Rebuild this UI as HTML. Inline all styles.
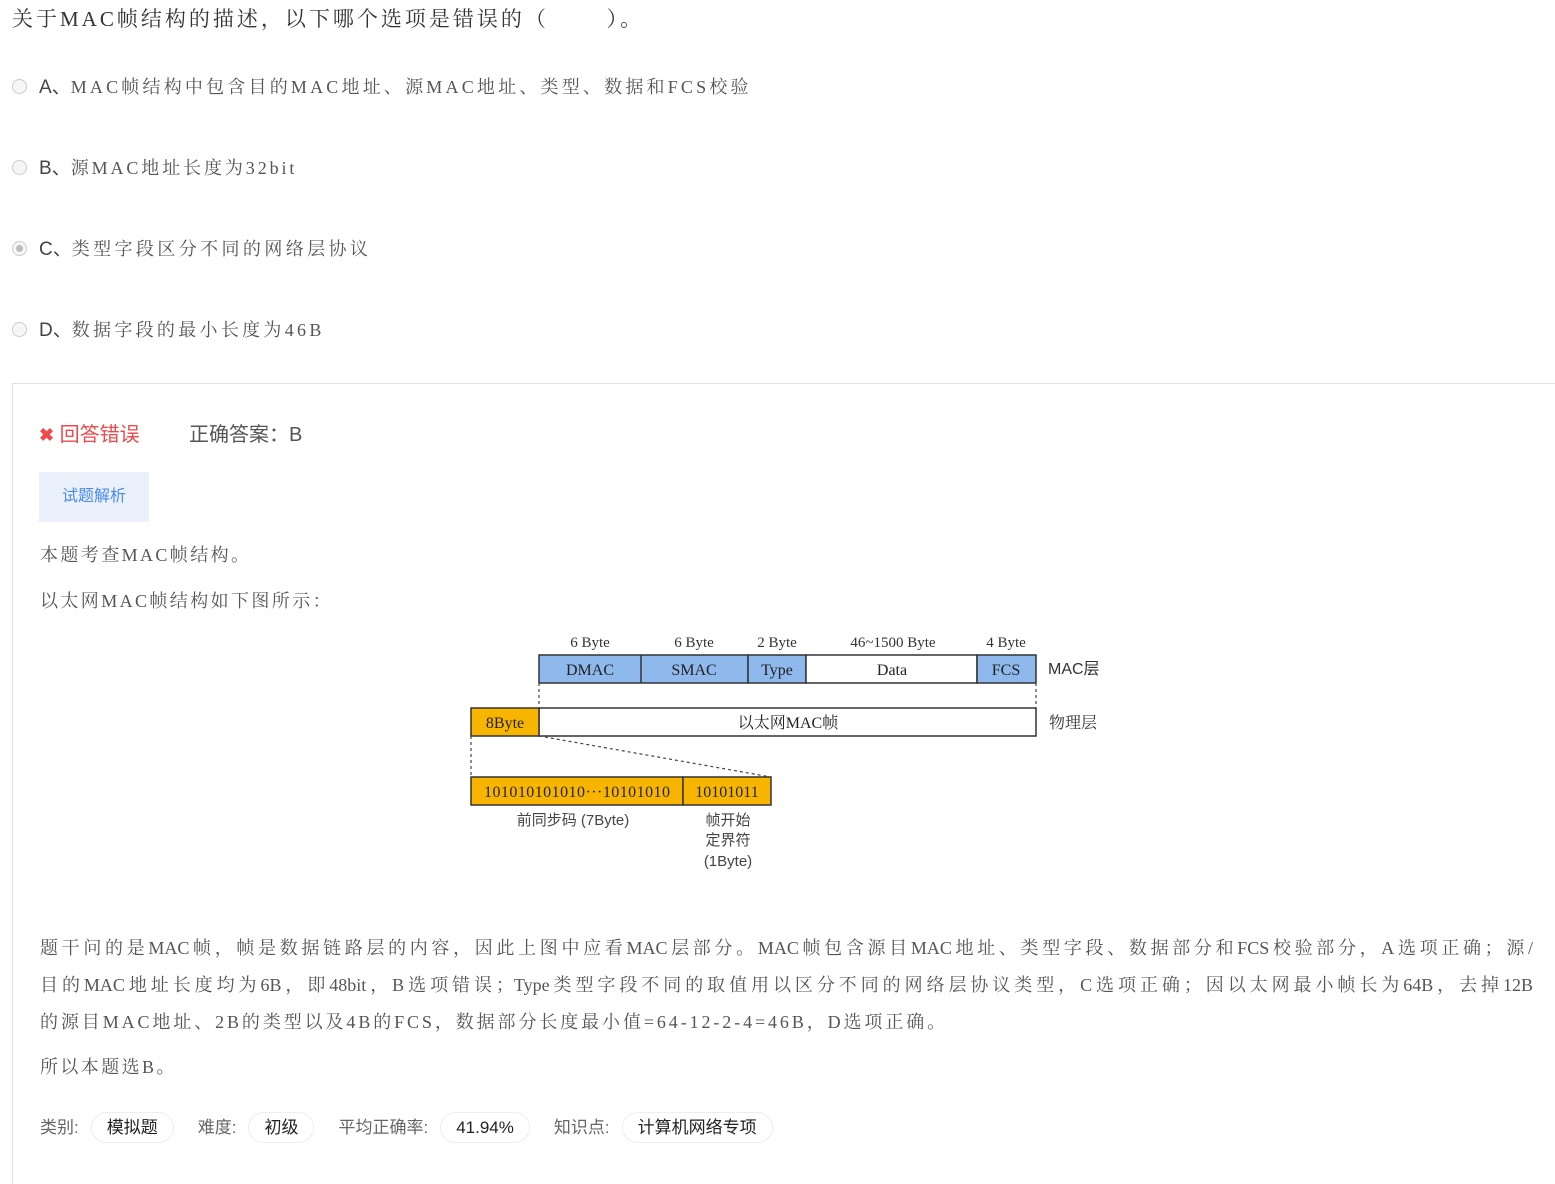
<!DOCTYPE html>
<html><head><meta charset="utf-8">
<style>
body{margin:0;width:1555px;height:1158px;background:#fff;position:relative;overflow:hidden;font-family:"Liberation Serif","Noto Serif CJK SC",serif;color:#333}
.abs{position:absolute;white-space:nowrap}
.q{left:12px;top:3px;font-size:21px;color:#333;letter-spacing:3px}
.opt{left:12px;font-size:18px;color:#555;letter-spacing:3.2px}
.radio{display:inline-block;width:15px;height:15px;border:1px solid #ccc;border-radius:50%;background:#f6f6f6;vertical-align:-1px;margin-right:12px;box-sizing:border-box;position:relative}
.radio.sel::after{content:"";position:absolute;left:3px;top:3px;width:7px;height:7px;border-radius:50%;background:#bbb}
.lt{font-family:"Liberation Sans","Noto Sans CJK SC",sans-serif;letter-spacing:0;font-size:19px;color:#444}
.panel{position:absolute;left:12px;top:383px;width:1560px;height:800px;border-left:1px solid #e2e2e2;border-top:1px solid #e2e2e2}
.sans{font-family:"Liberation Sans","Noto Sans CJK SC",sans-serif}
.txt{font-size:18px;color:#555;letter-spacing:2.4px}
.jl{position:absolute;left:40px;width:1493px;text-align:justify;text-align-last:justify;font-size:18px;color:#555;white-space:normal}
.tag{display:inline-block;border:1px solid #eee;border-radius:16px;padding:0 15px;height:29px;line-height:29px;color:#222;margin-right:24px}
.lab{color:#666;margin-right:12px}
</style></head><body>
<div class="abs q">关于MAC帧结构的描述，以下哪个选项是错误的（&nbsp;&nbsp;&nbsp;&nbsp;&nbsp;&nbsp;&nbsp;）。</div>
<div class="abs opt" style="top:72px"><span class="radio"></span><span class="lt">A、</span>MAC帧结构中包含目的MAC地址、源MAC地址、类型、数据和FCS校验</div>
<div class="abs opt" style="top:153px;letter-spacing:2.9px"><span class="radio"></span><span class="lt">B、</span>源MAC地址长度为32bit</div>
<div class="abs opt" style="top:234px;letter-spacing:3.4px"><span class="radio sel"></span><span class="lt">C、</span>类型字段区分不同的网络层协议</div>
<div class="abs opt" style="top:315px;letter-spacing:3.3px"><span class="radio"></span><span class="lt">D、</span>数据字段的最小长度为46B</div>
<div class="panel"></div>
<div class="abs sans" style="left:39px;top:418px;font-size:20px;color:#f0484b"><span style="font-size:18px;font-weight:bold">✖</span> 回答错误</div>
<div class="abs sans" style="left:189px;top:418px;font-size:20px;color:#555">正确答案：B</div>
<div class="abs sans" style="left:39px;top:472px;width:110px;height:50px;background:#eaf1fd;color:#4a8af4;font-size:16px;line-height:50px;text-align:center">试题解析</div>
<div class="abs txt" style="left:40px;top:541px">本题考查MAC帧结构。</div>
<div class="abs txt" style="left:40px;top:587px">以太网MAC帧结构如下图所示：</div>
<svg class="abs" style="left:0;top:0" width="1555" height="1158" font-family="Liberation Serif,Noto Serif CJK SC,serif" font-size="15" fill="#333">
<g text-anchor="middle">
<text x="590" y="647">6 Byte</text><text x="694" y="647">6 Byte</text><text x="777" y="647">2 Byte</text><text x="893" y="647">46~1500 Byte</text><text x="1006" y="647">4 Byte</text>
</g>
<g stroke="#333" stroke-width="1.5">
<rect x="539" y="655" width="209" height="28" fill="#8fb8ec"/>
<line x1="641" y1="655" x2="641" y2="683"/>
<rect x="748" y="655" width="58" height="28" fill="#8fb8ec"/>
<rect x="806" y="655" width="171" height="28" fill="#fff"/>
<rect x="977" y="655" width="59" height="28" fill="#8fb8ec"/>
<rect x="539" y="708" width="497" height="28" fill="#fff"/>
<rect x="471" y="708" width="68" height="28" fill="#f7b500"/>
<rect x="471" y="777" width="212" height="28" fill="#f7b500"/>
<rect x="683" y="777" width="88" height="28" fill="#f7b500"/>
</g>
<g stroke="#444" stroke-width="1.2" stroke-dasharray="3,3" fill="none">
<line x1="539" y1="683" x2="539" y2="708"/><line x1="1036" y1="683" x2="1036" y2="708"/>
<line x1="471" y1="736" x2="471" y2="777"/><line x1="539" y1="736" x2="771" y2="777"/>
</g>
<g text-anchor="middle" fill="#222" font-size="16">
<text x="590" y="675">DMAC</text><text x="694" y="675">SMAC</text><text x="777" y="675">Type</text><text x="892" y="675">Data</text><text x="1006" y="675">FCS</text>
<text x="505" y="728">8Byte</text><text x="788" y="728">以太网MAC帧</text>
<text x="577" y="797" textLength="186">101010101010···10101010</text><text x="727" y="797">10101011</text>
</g>
<text x="1048" y="674" font-family="Liberation Sans,Noto Sans CJK SC,sans-serif" font-size="16">MAC层</text>
<text x="1049" y="728" font-size="16">物理层</text>
<g text-anchor="middle" font-family="Liberation Sans,Noto Sans CJK SC,sans-serif" font-size="15" fill="#444">
<text x="573" y="825">前同步码 (7Byte)</text><text x="728" y="825">帧开始</text><text x="728" y="845">定界符</text><text x="728" y="866">(1Byte)</text>
</g>
</svg>
<div class="jl" style="top:934px">题干问的是MAC帧，帧是数据链路层的内容，因此上图中应看MAC层部分。MAC帧包含源目MAC地址、类型字段、数据部分和FCS校验部分，A选项正确；源/</div>
<div class="jl" style="top:971px">目的MAC地址长度均为6B，即48bit，B选项错误；Type类型字段不同的取值用以区分不同的网络层协议类型，C选项正确；因以太网最小帧长为64B，去掉12B</div>
<div class="abs txt" style="left:40px;top:1008px;letter-spacing:2.9px">的源目MAC地址、2B的类型以及4B的FCS，数据部分长度最小值=64-12-2-4=46B，D选项正确。</div>
<div class="abs txt" style="left:40px;top:1053px">所以本题选B。</div>
<div class="abs sans" style="left:40px;top:1112px;font-size:17px"><span class="lab">类别:</span><span class="tag">模拟题</span><span class="lab">难度:</span><span class="tag">初级</span><span class="lab">平均正确率:</span><span class="tag">41.94%</span><span class="lab">知识点:</span><span class="tag">计算机网络专项</span></div>
</body></html>
